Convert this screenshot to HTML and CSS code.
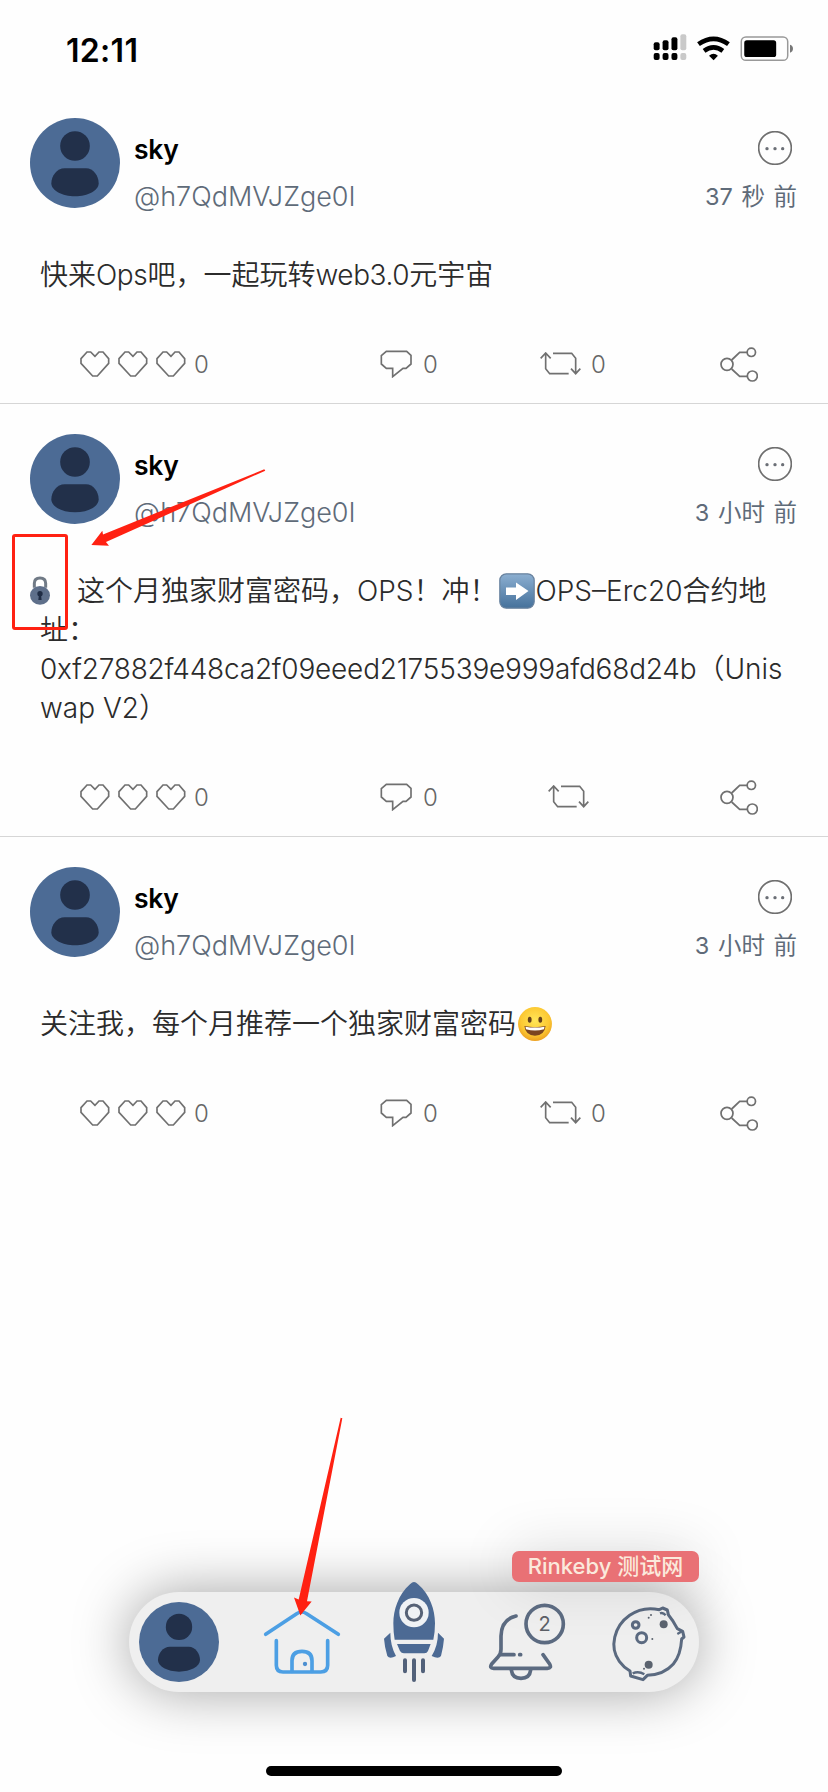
FILE: index.html
```html
<!DOCTYPE html>
<html lang="zh-CN">
<head>
<meta charset="utf-8">
<title>Ops</title>
<link rel="stylesheet" href="styles.css">
</head>
<body>
<svg class="defs" width="0" height="0">
  <symbol id="avatar" viewBox="0 0 270 270">
    <circle cx="135" cy="135" r="135" fill="#4c6b95"/>
    <circle cx="135" cy="84" r="44.5" fill="#22304a"/>
    <path d="M104 151H168C190 151 206 174 206 196C206 218 174 235 135 235C96 235 64 218 64 196C64 174 81 151 104 151Z" fill="#22304a"/>
  </symbol>
  <symbol id="more" viewBox="0 0 102 102">
    <circle cx="51" cy="51" r="49" fill="none" stroke="#6f6f6f" stroke-width="5"/>
    <circle cx="27" cy="53" r="5" fill="#6b6f76"/><circle cx="51" cy="53" r="5" fill="#6b6f76"/><circle cx="74" cy="53" r="5" fill="#6b6f76"/>
  </symbol>
  <symbol id="heart" viewBox="239 95 90 78">
    <path d="M284 111L271 98H260L242 118V132L277 170H291L325 132V118L308 98H296Z" fill="none" stroke="#707070" stroke-width="5"/>
  </symbol>
  <symbol id="comment" viewBox="61 88 96 84">
    <path d="M80 92H141L154 104V130L139 143H130L99 168V143H80L65 130V105Z" fill="none" stroke="#707070" stroke-width="5"/>
  </symbol>
  <symbol id="repost" viewBox="541 97 123 72">
    <path d="M580 101H636L648 116V161M634 147L648 162L662 147M627 162H570L558 147V101M543 116L558 100L573 116" fill="none" stroke="#707070" stroke-width="5"/>
  </symbol>
  <symbol id="share" viewBox="1079 80 114 105">
    <g fill="none" stroke="#707070" stroke-width="5.2"><circle cx="1100" cy="132" r="18"/><circle cx="1173" cy="96" r="12.5"/><circle cx="1176" cy="167" r="15"/><path d="M1114 119L1138 96H1160M1114 146L1138 168H1161"/></g>
  </symbol>
</svg>

<div class="screen">
  <header class="status">
    <span class="clock">12:11</span>
    <svg class="status-icons" viewBox="717 104 424 82" width="141" height="27">
      <g fill="#000"><rect x="717" y="129" width="18" height="24" rx="6"/><rect x="744" y="123" width="18" height="30" rx="6"/><rect x="771" y="114" width="18" height="39" rx="6"/><rect x="717" y="162" width="18" height="21" rx="6"/><rect x="744" y="162" width="18" height="21" rx="6"/><rect x="771" y="162" width="18" height="21" rx="6"/></g>
      <g fill="#c9c9c9"><rect x="798" y="105" width="18" height="48" rx="6"/><rect x="798" y="162" width="18" height="21" rx="6"/></g>
      <g fill="none" stroke="#000" stroke-width="14"><path d="M853 135Q899 102 944 135"/><path d="M870 155Q899 134 927 155"/></g>
      <path d="M885 170Q899 158 912 170L899 184Z"/>
      <rect x="983" y="113" width="141" height="71" rx="14" fill="none" stroke="#999" stroke-width="4.5"/>
      <rect x="992" y="123" width="97" height="51" rx="8"/>
      <path d="M1131 137Q1140 140 1140 149Q1140 158 1131 161Z" fill="#777"/>
    </svg>
  </header>

  <main>
    <article class="post">
      <div class="head">
        <svg class="avatar"><use href="#avatar"/></svg>
        <div class="who"><b class="name">sky</b><span class="handle">@h7QdMVJZge0I</span></div>
        <div class="meta"><svg class="more"><use href="#more"/></svg><span class="time">37 秒 前</span></div>
      </div>
      <p class="text">快来<span class="latin">Ops</span>吧，一起玩转<span class="latin">web3.0</span>元宇宙</p>
      <div class="actions">
        <div class="likes"><svg><use href="#heart"/></svg><svg><use href="#heart"/></svg><svg><use href="#heart"/></svg><span>0</span></div>
        <div class="comments"><svg><use href="#comment"/></svg><span>0</span></div>
        <div class="reposts"><svg><use href="#repost"/></svg><span>0</span></div>
        <svg class="share"><use href="#share"/></svg>
      </div>
    </article>

    <article class="post">
      <div class="head">
        <svg class="avatar"><use href="#avatar"/></svg>
        <div class="who"><b class="name">sky</b><span class="handle">@h7QdMVJZge0I</span></div>
        <div class="meta"><svg class="more"><use href="#more"/></svg><span class="time">3 小时 前</span></div>
      </div>
      <p class="text"><svg class="lock" viewBox="90 460 60 87"><path d="M103 495V482Q103 466 120 466Q137 466 137 482V495" fill="none" stroke="#707a86" stroke-width="9"/><ellipse cx="120" cy="518" rx="30" ry="28" fill="#5e6f8a"/><circle cx="120" cy="513" r="8" fill="#1f2c44"/><path d="M117 516H123L125 532H115Z" fill="#1f2c44"/></svg>这个月独家财富密码，OPS！冲！<svg class="emoji" viewBox="0 0 36 36"><defs><linearGradient id="key" x1="0" y1="0" x2="0" y2="1"><stop offset="0" stop-color="#8cafd1"/><stop offset="1" stop-color="#45719b"/></linearGradient></defs><rect x=".8" y=".8" width="34.4" height="34.4" rx="6.5" fill="url(#key)" stroke="#68829e" stroke-width="1.2"/><path d="M7 14.5H17V9.5L29.500 18L17 27V22H7Z" fill="#fff"/></svg>OPS–Erc20合约地<br>址：<br><span class="hash">0xf27882f448ca2f09eeed2175539e999afd68d24b</span>（Unis<br>wap V2）</p>
      <div class="actions">
        <div class="likes"><svg><use href="#heart"/></svg><svg><use href="#heart"/></svg><svg><use href="#heart"/></svg><span>0</span></div>
        <div class="comments"><svg><use href="#comment"/></svg><span>0</span></div>
        <div class="reposts no-count"><svg><use href="#repost"/></svg></div>
        <svg class="share"><use href="#share"/></svg>
      </div>
      <div class="mark-box"></div>
      <svg class="mark-arrow" viewBox="274 146 525 232"><path d="M274 375L307 332L309 343L795 147L798 151L318 366L327 377Z" fill="#ff2112"/></svg>
    </article>

    <article class="post last">
      <div class="head">
        <svg class="avatar"><use href="#avatar"/></svg>
        <div class="who"><b class="name">sky</b><span class="handle">@h7QdMVJZge0I</span></div>
        <div class="meta"><svg class="more"><use href="#more"/></svg><span class="time">3 小时 前</span></div>
      </div>
      <p class="text">关注我，每个月推荐一个独家财富密码<svg class="emoji face" viewBox="0 0 34 34"><defs><radialGradient id="skin" cx=".5" cy=".4" r=".6"><stop offset="0" stop-color="#ffe658"/><stop offset=".7" stop-color="#fcc832"/><stop offset="1" stop-color="#eda121"/></radialGradient></defs><circle cx="17" cy="17" r="16" fill="url(#skin)"/><ellipse cx="12" cy="13" rx="1.8" ry="2.8" fill="#65401b"/><ellipse cx="22" cy="13" rx="1.8" ry="2.8" fill="#65401b"/><path d="M7 19Q17 21 27 19Q26 28 17 28Q8 28 7 19Z" fill="#7b4520"/><path d="M8 19.5Q17 21.3 26 19.5L25.5 22Q17 24.5 8.500 22Z" fill="#fff"/></svg></p>
      <div class="actions">
        <div class="likes"><svg><use href="#heart"/></svg><svg><use href="#heart"/></svg><svg><use href="#heart"/></svg><span>0</span></div>
        <div class="comments"><svg><use href="#comment"/></svg><span>0</span></div>
        <div class="reposts"><svg><use href="#repost"/></svg><span>0</span></div>
        <svg class="share"><use href="#share"/></svg>
      </div>
    </article>
  </main>

  <nav class="dock">
    <span class="network">Rinkeby 测试网</span>
    <svg class="me"><use href="#avatar"/></svg>
    <svg class="home" viewBox="432 630 228 195"><g fill="none" stroke="#4c9fe4" stroke-width="11" stroke-linecap="round" stroke-linejoin="round"><path d="M437 703L530 641Q545 631 560 641L655 703"/><path d="M469 722V796Q469 816 489 816H602Q623 816 623 796V722"/><path d="M516 814V782Q516 754 546 754Q576 754 576 782V814"/></g><circle cx="555" cy="792" r="6.500" fill="#4c8fd0"/></svg>
    <svg class="rocket" viewBox="132 156 180 300"><path d="M222 156Q227 156 234 163C270 194 285 240 285 280Q285 307 280 329H164Q160 307 160 280C160 240 175 194 210 163Q217 156 222 156ZM171 342H272L264 363Q261 370 253 370H192Q184 370 180 363ZM151 308Q151 347 168 378Q149 388 142 378Q134 352 132 326ZM294 308L312 326Q310 352 303 378Q296 388 275 378Q294 347 294 308Z" fill="#4c6a94"/><circle cx="222" cy="248" r="44" fill="#eff2f5"/><circle cx="222" cy="248" r="23" fill="none" stroke="#566276" stroke-width="9"/><path d="M195 391V424M222 391V450M249 391V424" stroke="#52617a" stroke-width="12" stroke-linecap="round"/></svg>
    <div class="bell"><svg viewBox="447 219 231 231"><g fill="none" stroke="#5b6a80" stroke-width="11" stroke-linecap="round" stroke-linejoin="round"><path d="M528 258Q484 268 483 318V358Q483 372 474 381L455 402Q447 415 461 415H622Q636 415 629 402L609 374"/><path d="M483 374H522M539 374H542"/><path d="M514 420Q517 445 543 445Q569 445 572 420"/><circle cx="614" cy="282" r="56"/></g></svg><span class="count">2</span></div>
    <svg class="moon" viewBox="156 228 222 228"><g fill="none" stroke="#5b6a80" stroke-width="9" stroke-linejoin="round"><path d="M298 239Q248 228 209 256C162 289 147 352 178 394Q190 411 210 423L212 438L249 449L262 436Q312 434 340 402Q362 376 365 327L372 321L368 304L352 296Q340 272 325 254L322 240L308 234Z"/><path d="M218 430Q236 422 253 433M300 250Q309 246 317 256M352 312L366 304" stroke-width="7"/><circle cx="227" cy="285" r="10"/><circle cx="245" cy="323" r="15"/></g><g fill="#5b636f"><circle cx="311" cy="283" r="12"/><circle cx="266" cy="404" r="12"/><circle cx="266" cy="263" r="3"/><circle cx="273" cy="255" r="3"/><circle cx="277" cy="327" r="3"/><circle cx="252" cy="416" r="3"/></g></svg>
    <svg class="dock-arrow" viewBox="518 52 150 596"><path d="M540 647L521 593L535 599L661 54L666 55L560 604L574 605Z" fill="#ff2112"/></svg>
  </nav>
  <div class="home-bar"></div>
</div>
</body>
</html>
```
FILE: styles.css
```css
* { box-sizing: border-box; }
body { margin: 0; background: #fefefe; font-family: Inter, "Noto Sans CJK SC", sans-serif; }
svg { display: block; flex: none; overflow: visible; }
.defs { position: absolute; }
.screen { width: 828px; height: 1792px; display: flex; flex-direction: column; overflow: hidden; }
.status { height: 88px; padding: 34px 34px 0 66px; display: flex; justify-content: space-between; align-items: flex-start; }
.clock { font-size: 32px; line-height: 33px; font-weight: 600; color: #000; letter-spacing: .3px; }
.post { position: relative; padding: 30px 31px 19px 30px; border-bottom: 1px solid #d6d6d6; }
.post.last { border-bottom-color: transparent; }
.head { display: flex; height: 90px; }
.avatar { width: 90px; height: 90px; }
.who { display: flex; flex-direction: column; margin-left: 14px; padding-top: 13px; }
.name { font-size: 26.5px; line-height: 36px; font-weight: 600; color: #000; letter-spacing: -.2px; }
.handle { font-size: 27px; line-height: 36px; margin-top: 12px; font-weight: 300; color: #5f6b79; }
.meta { margin-left: auto; display: flex; flex-direction: column; align-items: flex-end; padding-top: 13px; }
.more { width: 34px; height: 34px; margin-right: 5px; }
.time { font-size: 23.5px; line-height: 36px; margin-top: 14px; color: #5f6b79; white-space: nowrap; word-spacing: 2px; }
.text { margin: 48px 0 49px 10px; font-size: 28px; line-height: 39px; font-weight: 350; color: #2b2b2b; white-space: nowrap; }
.latin { letter-spacing: -.4px; }
.hash { letter-spacing: -.2px; }
.lock { display: inline-block; width: 20px; height: 29px; margin: 0 27px 0 -10px; vertical-align: -4px; }
.emoji { display: inline-block; width: 36px; height: 36px; margin: -6px 1px; vertical-align: -2px; }
.actions { height: 40px; display: grid; grid-template-columns: 350px 160px 180px 38px; align-items: center; font-size: 24px; font-weight: 300; color: #666; }
.actions > div { display: flex; align-items: center; }
.likes { margin-left: 50px; gap: 8px; }
.likes svg { width: 30px; height: 26px; }
.comments { gap: 11px; }
.comments svg { width: 32px; height: 28px; }
.reposts { gap: 10px; }
.reposts svg { width: 41px; height: 24px; }
.no-count { margin-left: 8px; }
.share { width: 38px; height: 35px; }
.mark-box { position: absolute; left: 12px; top: 130px; width: 56px; height: 96px; border: 3px solid #ff2112; border-radius: 3px; }
.mark-arrow { position: absolute; left: 91px; top: 65px; width: 175px; height: 77px; }
.dock { position: relative; margin: auto 0 100px 129px; width: 570px; height: 100px; border-radius: 50px; background: #efefef; box-shadow: 0 0 56px rgba(0,0,0,.36); display: flex; align-items: flex-start; padding-left: 10px; flex: none; }
.me { width: 80px; height: 80px; margin-top: 10px; }
.home { width: 76px; height: 65px; margin: 18px 0 0 45px; }
.rocket { width: 60px; height: 100px; margin: -10px 0 0 44px; }
.bell { position: relative; width: 77px; height: 77px; margin: 11px 0 0 45px; }
.bell svg { width: 77px; height: 77px; }
.count { position: absolute; right: 2px; top: 1px; width: 39px; text-align: center; font-size: 20px; line-height: 40px; color: #5b5f66; }
.moon { width: 74px; height: 76px; margin: 14px 0 0 46px; }
.network { position: absolute; right: 0; top: -41px; width: 187px; height: 31px; border-radius: 7px; background: #e97175; color: #fbe9dc; font-size: 22px; line-height: 31px; text-align: center; white-space: nowrap; font-weight: 500; box-shadow: 0 0 56px rgba(0,0,0,.15); }
.dock-arrow { position: absolute; left: 164px; top: -175px; width: 50px; height: 199px; }
.home-bar { position: absolute; left: 266px; top: 1766px; width: 296px; height: 10px; border-radius: 5px; background: #000; }
```
